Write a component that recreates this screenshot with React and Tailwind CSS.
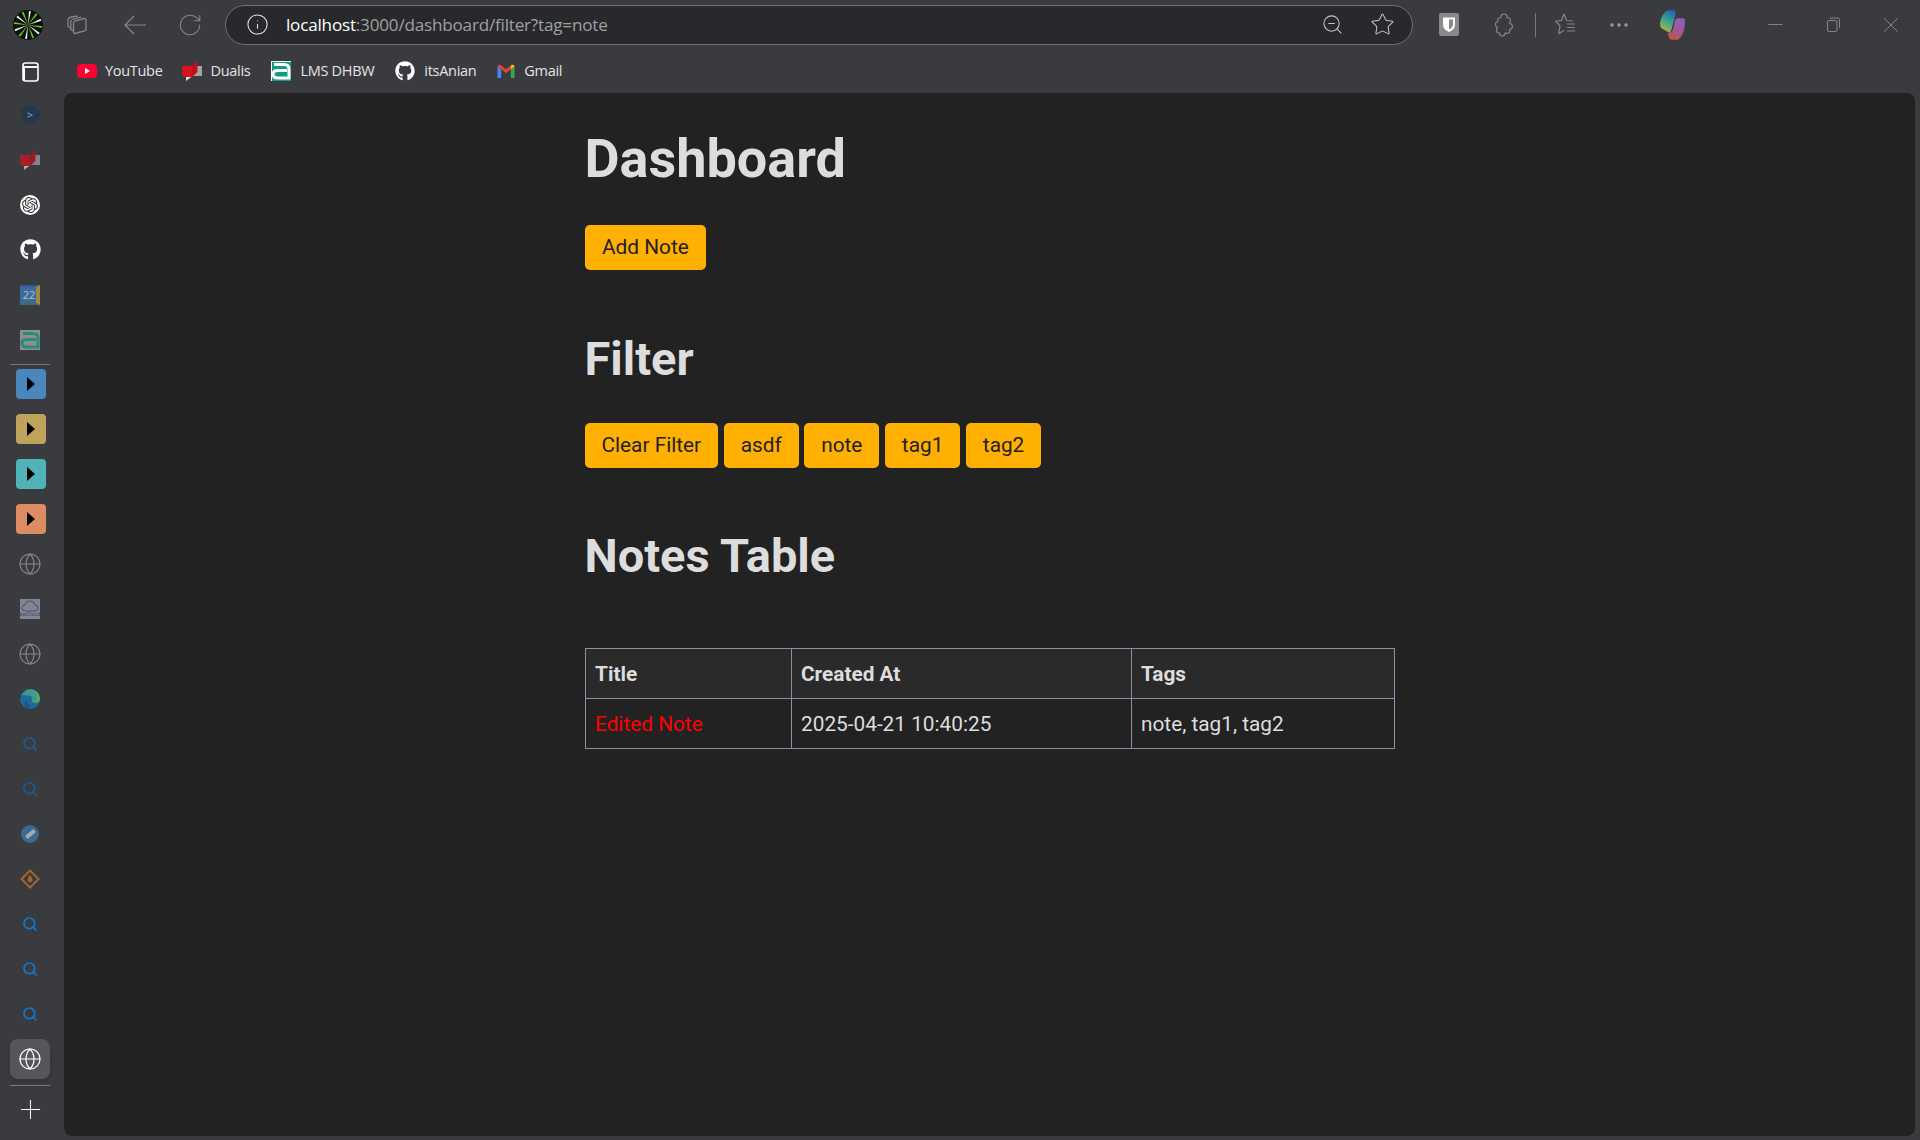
import { Globe, Info, Plus, RotateCw, Search, Star, X, ZoomOut, Minus, Ellipsis } from 'lucide-react';
import { FaGithub } from 'react-icons/fa';
import { SiOpenai } from 'react-icons/si';

const sans = { fontFamily: '"Open Sans", sans-serif' };

function Logo() {
  return (
    <svg width="32" height="32" viewBox="0 0 32 32">
      <circle cx="16" cy="16" r="15" fill="#0b0f0b" />
      {[0, 30, 60, 90, 120, 150, 180, 210, 240, 270, 300, 330].map((a) => (
        <path key={a} d="M16 16 L15 2 L17 2 Z" fill={a % 60 === 0 ? '#e8f5e0' : '#5fd11f'} transform={`rotate(${a + 8} 16 16)`} />
      ))}
    </svg>
  );
}

function TabsIcon() {
  return (
    <svg width="20" height="20" viewBox="0 0 20 20" fill="none" stroke="#85868a" strokeWidth="1.3">
      <path d="M8 18.5 Q6.5 18.5 6.5 17 V8 Q6.5 6.5 8 6 L17 3.5 Q19 3.2 19 5 V14 Q19 15.5 17.5 16 Z" />
      <path d="M6.5 15.5 Q3.8 15.5 3.8 13.5 V6.5 Q3.8 5 5.5 4.5 L14 2.2" />
      <path d="M3.8 12.5 Q1 12.5 1 10.5 V4.5 Q1 3 2.5 2.5 L10.5 1" />
    </svg>
  );
}

function BackArrow() {
  return (
    <svg width="22" height="20" viewBox="0 0 22 20" fill="none" stroke="#85868a" strokeWidth="1.2">
      <path d="M1 10 H22 M10 1 L1 10 L10 19" />
    </svg>
  );
}

function PuzzleIcon() {
  return (
    <svg width="18" height="24" viewBox="0 0 18 24" fill="none" stroke="#85868a" strokeWidth="1.2">
      <path d="M6 4 Q6 1 9 1 Q12 1 12 4 L12 5 Q15 4 15.5 7 Q15.5 9 14.5 10 Q17.5 11 17.5 13.5 Q17.5 16 14.5 16.5 Q15.5 20 12.5 20.5 Q11 20.5 10.5 20 Q9.5 23 7 23 Q4.5 22.5 4.5 20 Q1.5 20.5 1.5 17.5 Q1.5 16 2.5 15 Q0.5 13.5 0.5 11.5 Q0.5 9 3 8.5 Q1.8 5 5 4.8 Z" />
    </svg>
  );
}

function FavIcon() {
  return (
    <svg width="20" height="23" viewBox="0 0 20 23" fill="none" stroke="#85868a" strokeWidth="1.2">
      <path d="M9 1 L11.5 7.5 L18 8 M9 1 L6.5 7.5 L0.8 8.2 L5 13 L3.8 20.5 L9 17.5" />
      <path d="M12 11 H20 M12 14.5 H20 M12 18 H20" />
    </svg>
  );
}

function RestoreIcon() {
  return (
    <svg width="13" height="15" viewBox="0 0 13 15" fill="none" stroke="#85868a" strokeWidth="1">
      <rect x="0.5" y="3.5" width="9.5" height="11" rx="1.5" />
      <path d="M3 1 H11 Q12.5 1 12.5 2.5 V11" />
    </svg>
  );
}

function Dualis({ dim }) {
  return (
    <svg width="20" height="20" viewBox="0 0 20 20" className={dim ? 'opacity-70' : ''}>
      <path d="M11 5 H20 V15 H10 Z" fill="#a3a3a8" />
      <path d="M4 15.5 H10 L4 20 Z" fill="#e0e0e0" />
      <path d="M0 5 H11 V16 H2.5 L0 13.5 Z" fill="#d5121e" />
      <path d="M10 5 L15.5 0 V11 L10 16 Z" fill="#c20f1b" />
    </svg>
  );
}

function Moodle({ dim }) {
  const bg = dim ? '#8f8f8f' : '#0f9d8a';
  const fg = dim ? '#2a8a7c' : '#ffffff';
  return (
    <svg width="20" height="20" viewBox="0 0 20 20">
      <rect width="20" height="20" fill={dim ? '#8f8f8f' : '#ffffff'} />
      <rect x="1" y="1" width="19" height="19" fill={bg} />
      <path d="M3 3.5 H13 Q18 3.5 18 8 V17 H7 Q2 17 2 13 Q2 9.5 7 9.5 H16" fill="none" stroke={fg} strokeWidth="3" />
    </svg>
  );
}

function Youtube() {
  return (
    <svg width="20" height="14" viewBox="0 0 20 14">
      <rect width="20" height="14" rx="4" fill="#ff0033" />
      <path d="M8 4 L13 7 L8 10 Z" fill="#ffffff" />
    </svg>
  );
}

function Gmail() {
  return (
    <svg width="18" height="15" viewBox="0 0 16 14">
      <path d="M0 2 V13 H3.5 V5 Z" fill="#4285f4" />
      <path d="M16 2 V13 H12.5 V5 Z" fill="#34a853" />
      <path d="M0 2 Q1 0 3 1 L8 5 L13 1 Q15 0 16 2 L12.5 5 L8 8.5 L3.5 5 Z" fill="#ea4335" />
      <path d="M13 1 Q15 0 16 2 L12.5 5 V2 Z" fill="#fbbc04" />
    </svg>
  );
}

function Copilot() {
  return (
    <svg width="27" height="32" viewBox="0 0 28 28" preserveAspectRatio="none">
      <defs>
        <linearGradient id="cpA" x1="0.6" y1="0" x2="0.2" y2="1">
          <stop offset="0" stopColor="#2a66b8" />
          <stop offset="0.5" stopColor="#3fa98a" />
          <stop offset="1" stopColor="#c9b23c" />
        </linearGradient>
        <linearGradient id="cpB" x1="0.6" y1="0" x2="0.4" y2="1">
          <stop offset="0" stopColor="#8a5fc4" />
          <stop offset="0.6" stopColor="#a8558f" />
          <stop offset="1" stopColor="#b9583f" />
        </linearGradient>
      </defs>
      <path d="M9 1 H15 Q18 1 17 5 L13 18 Q12 21 9 20 L3 17 Q1 16 1 13 Q2 4 9 1 Z" fill="url(#cpA)" />
      <path d="M19 8 H25 Q27 8 27 11 Q27 22 20 27 H14 Q11 27 10 24 L9 21 L13 20 Q15 18 16 12 Q17 8 19 8 Z" fill="url(#cpB)" />
    </svg>
  );
}

function Bitwarden() {
  return (
    <div className="w-5 h-[23px] bg-[#8a8a8a] rounded-[2px] flex items-center justify-center">
      <svg width="14" height="17" viewBox="0 0 14 16">
        <path d="M1 1 H13 V8 Q13 13 7 15.5 Q1 13 1 8 Z" fill="#ffffff" />
        <path d="M7 3 H11 V8 Q11 11 7 13 Z" fill="#8a8a8a" />
      </svg>
    </div>
  );
}

function PanelIcon() {
  return (
    <svg width="17" height="20" viewBox="0 0 17 20" fill="none" stroke="#ffffff" strokeWidth="1.6">
      <rect x="1" y="1" width="15" height="18" rx="2.5" />
      <path d="M1 5 H16 M2 5 V18" strokeWidth="2" />
    </svg>
  );
}

function Edge() {
  return (
    <svg width="20" height="20" viewBox="0 0 20 20">
      <circle cx="10" cy="10" r="10" fill="#1f6a9c" />
      <path d="M2 6 Q6 -1 13 0.5 Q20 3 20 11 Q19 14 15 14 Q11 14 12 11 Q13 7 9 6.5 Q5 6 2 6 Z" fill="#3f9c8c" />
      <path d="M15 1.5 Q20 4 20 11 Q19 14 15 14 Q16 10 17 7 Q17 4 15 1.5 Z" fill="#55a860" />
      <path d="M7 10 Q6 15 11 17 Q9 20 5 18 Q3 13 7 10 Z" fill="#2c4f80" />
    </svg>
  );
}

function BwCloud() {
  return (
    <div className="w-5 h-5 bg-[#858590] flex flex-col items-center justify-center text-[5px] text-[#3b3d6a] leading-none">
      <svg width="18" height="12" viewBox="0 0 18 12" fill="none" stroke="#3b3d6a" strokeWidth="0.8">
        <path d="M4 11 Q0.5 11 1 7.5 Q1.5 5 4 5 Q5 1 9 1 Q13 1 14 5 Q17.5 5.5 17 8.5 Q16.5 11 14 11 Z" />
      </svg>
      <span>bwCloud</span>
    </div>
  );
}

function Calendar() {
  return (
    <div className="w-5 h-5 bg-[#3f6ea8] border-t-2 border-r-4 border-b-2 border-l-2 border-t-[#2f5f9a] border-r-[#a8953a] border-b-[#3a7a50] border-l-[#3f6ea8] flex items-center justify-center text-[11px] text-[#c4cfe0] leading-none opacity-90" style={sans}>
      22
    </div>
  );
}

function Tab({ color }) {
  const bg = { blue: 'bg-[#4a87bd]', gold: 'bg-[#bfa35a]', teal: 'bg-[#4fb3b8]', orange: 'bg-[#dd8c62]' }[color];
  return (
    <div className={`ml-[1px] w-[30px] h-[30px] rounded-[4px] flex items-center justify-center ${bg}`}>
      <svg width="8" height="14" viewBox="0 0 8 14"><path d="M0 0 L8 7 L0 14 Z" fill="#000000" /></svg>
    </div>
  );
}

function BarIcon({ children }) {
  return <div className="h-[45px] flex items-center justify-center">{children}</div>;
}

function Bookmark({ icon, label, className }) {
  return (
    <div className={`flex items-center text-[14.5px] text-[#e4e4e4] tracking-[-0.3px] ${className}`} style={sans}>
      {icon}
      <span>{label}</span>
    </div>
  );
}

function Sidebar() {
  return (
    <div className="w-[64px] shrink-0 flex flex-col items-stretch pl-[1px] pr-[5px] -mt-[1px]">
      <BarIcon>
        <div className="w-[19px] h-[19px] rounded-full bg-[#24384e] flex items-center justify-center text-[#8fa3b5] text-[11px] leading-none">&gt;</div>
      </BarIcon>
      <BarIcon><Dualis dim /></BarIcon>
      <BarIcon>
        <div className="w-5 h-5 rounded-full bg-white flex items-center justify-center text-[#333]"><SiOpenai size={16} /></div>
      </BarIcon>
      <BarIcon><FaGithub size={21} color="#ffffff" /></BarIcon>
      <BarIcon><Calendar /></BarIcon>
      <BarIcon><Moodle dim /></BarIcon>
      <div className="h-px mx-[9px] mt-[2px] -mb-[4px] bg-[#77787c]" />
      <BarIcon><Tab color="blue" /></BarIcon>
      <BarIcon><Tab color="gold" /></BarIcon>
      <BarIcon><Tab color="teal" /></BarIcon>
      <BarIcon><Tab color="orange" /></BarIcon>
      <BarIcon><Globe size={24} strokeWidth={1.1} color="#8a8a8a" /></BarIcon>
      <BarIcon><BwCloud /></BarIcon>
      <BarIcon><Globe size={24} strokeWidth={1.1} color="#8a8a8a" /></BarIcon>
      <BarIcon><Edge /></BarIcon>
      <BarIcon><Search size={16} strokeWidth={2.5} color="#1d5a8f" /></BarIcon>
      <BarIcon><Search size={16} strokeWidth={2.5} color="#1d5a8f" /></BarIcon>
      <BarIcon>
        <div className="w-[18px] h-[18px] rounded-full bg-[#3a6a94] flex items-center justify-center">
          <div className="w-[11px] h-[4px] bg-[#a8a8a8] rotate-[-40deg] rounded-[1px]" />
        </div>
      </BarIcon>
      <BarIcon>
        <svg width="20" height="20" viewBox="0 0 20 20">
          <path d="M10 1.5 L18.5 10 L10 18.5 L1.5 10 Z" fill="none" stroke="#a8622c" strokeWidth="2" />
          <path d="M10 6 Q13 10 12.5 11.5 A2.7 2.7 0 0 1 7.5 11.5 Q7 10 10 6 Z" fill="#a8622c" />
        </svg>
      </BarIcon>
      <BarIcon><Search size={16} strokeWidth={2.5} color="#0e78d5" /></BarIcon>
      <BarIcon><Search size={16} strokeWidth={2.5} color="#0e78d5" /></BarIcon>
      <BarIcon><Search size={16} strokeWidth={2.5} color="#0e78d5" /></BarIcon>
      <div className="mx-[9px] h-[40px] mt-[3px] rounded-[8px] bg-[#55565b] shadow-md flex items-center justify-center">
        <Globe size={24} strokeWidth={1.2} color="#ffffff" />
      </div>
      <div className="h-px mx-[9px] mt-[6px] bg-[#77787c]" />
      <div className="flex justify-center pt-[8px]">
        <Plus size={31} strokeWidth={0.8} color="#ffffff" />
      </div>
    </div>
  );
}

const tags = ['Clear Filter', 'asdf', 'note', 'tag1', 'tag2'];

export default function App() {
  return (
    <div className="w-[1920px] h-[1140px] bg-[#3a3b3f] flex flex-col overflow-hidden">
      {/* Browser toolbar */}
      <div className="h-[49px] flex items-center shrink-0">
        <div className="ml-[12px] w-[32px] h-[32px]"><Logo /></div>
        <div className="ml-[23px]"><TabsIcon /></div>
        <div className="ml-[37px]"><BackArrow /></div>
        <RotateCw size={26} strokeWidth={1} color="#85868a" className="ml-[31px]" />
        <div className="ml-[22px] w-[1188px] h-[40px] rounded-full border border-[#6f7074] bg-[#28292c] flex items-center shrink-0">
          <Info size={23} strokeWidth={1.1} color="#e6e6e6" className="ml-[20px]" />
          <div className="ml-[17px] text-[17.1px] text-[#a0a0a0] tracking-[-0.2px]" style={sans}>
            <span className="text-white">localhost</span>:3000/dashboard/filter?tag=note
          </div>
          <ZoomOut size={23} strokeWidth={1.1} color="#c4c4c4" className="ml-auto" />
          <Star size={25} strokeWidth={1} color="#c4c4c4" className="ml-[26px] mr-[17px]" />
        </div>
        <div className="ml-[26px]"><Bitwarden /></div>
        <div className="ml-[36px]"><PuzzleIcon /></div>
        <div className="ml-[22px] w-px h-[24px] bg-[#77787c]" />
        <div className="ml-[19px]"><FavIcon /></div>
        <Ellipsis size={24} strokeWidth={1.4} color="#a0a0a0" className="ml-[32px]" />
        <div className="ml-[28px]"><Copilot /></div>
        <Minus size={23} strokeWidth={1} color="#85868a" className="ml-[78px]" />
        <div className="ml-[40px]"><RestoreIcon /></div>
        <X size={26} strokeWidth={0.9} color="#85868a" className="ml-[38px]" />
      </div>

      {/* Bookmarks */}
      <div className="h-[44px] flex items-center shrink-0">
        <div className="w-[60px] flex justify-center pt-[2px]">
          <PanelIcon />
        </div>
        <div className="ml-[17px] flex items-center">
          <Bookmark icon={<Youtube />} label="YouTube" className="gap-[8px] mr-[19px]" />
          <Bookmark icon={<Dualis />} label="Dualis" className="gap-[9px] mr-[21px]" />
          <Bookmark icon={<Moodle />} label="LMS DHBW" className="gap-[9px] mr-[21px]" />
          <Bookmark icon={<FaGithub size={20} color="#ffffff" />} label="itsAnian" className="gap-[9px] mr-[21px]" />
          <Bookmark icon={<Gmail />} label="Gmail" className="gap-[9px]" />
        </div>
      </div>

      <div className="flex-1 flex min-h-0">
        <Sidebar />
        {/* Page content */}
        <div className="flex-1 bg-[#222222] rounded-[8px] mr-[5px] mb-[4px] text-[#dddddd]" style={{ fontFamily: 'Roboto, sans-serif' }}>
          <div className="w-[810px] mx-auto">
            <h1 className="text-[54px] leading-[64px] font-bold mt-[34px] text-[#dddddd]">Dashboard</h1>
            <div className="mt-[34px]">
              <button className="h-[45px] px-[17.5px] pt-[1px] rounded-[5px] bg-[#ffb000] text-[#222222] text-[20.8px]">Add Note</button>
            </div>
            <h2 className="text-[47px] leading-[56px] font-bold mt-[61px] text-[#dddddd]">Filter</h2>
            <div className="mt-[36px] flex gap-[5.5px]">
              {tags.map((t) => (
                <button key={t} className="h-[45px] px-[17px] pt-[1px] rounded-[5px] bg-[#ffb000] text-[#222222] text-[20.8px]">{t}</button>
              ))}
            </div>
            <h2 className="text-[47px] leading-[56px] font-bold mt-[60px] text-[#dddddd]">Notes Table</h2>
            <table className="mt-[64px] w-full border-collapse text-[20.8px] text-left table-fixed">
              <thead>
                <tr className="bg-[#2a2a2a]">
                  <th className="w-[206px] h-[50px] px-[9.5px] pt-[2px] border border-[#8c8fa8] font-bold">Title</th>
                  <th className="w-[340px] h-[50px] px-[9.5px] pt-[2px] border border-[#8c8fa8] font-bold">Created At</th>
                  <th className="h-[50px] px-[9.5px] pt-[2px] border border-[#8c8fa8] font-bold">Tags</th>
                </tr>
              </thead>
              <tbody>
                <tr>
                  <td className="h-[50px] px-[9.5px] pt-[2px] border border-[#8c8fa8] text-[#ff0000]">Edited Note</td>
                  <td className="h-[50px] px-[9.5px] pt-[2px] border border-[#8c8fa8]">2025-04-21 10:40:25</td>
                  <td className="h-[50px] px-[9.5px] pt-[2px] border border-[#8c8fa8]">note, tag1, tag2</td>
                </tr>
              </tbody>
            </table>
          </div>
        </div>
      </div>
    </div>
  );
}
